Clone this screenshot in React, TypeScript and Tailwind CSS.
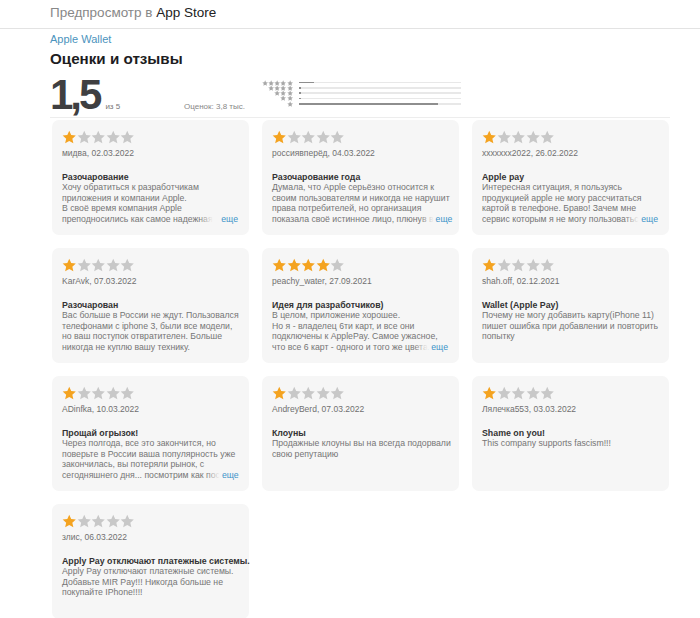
import React from "react";

type Review = {
  rating: number;
  author: string;
  title: string;
  lines: string[];
  more?: boolean;
};

const reviews: Review[] = [
  {
    rating: 1,
    author: "мидва, 02.03.2022",
    title: "Разочарование",
    lines: [
      "Хочу обратиться к разработчикам",
      "приложения и компании Apple.",
      "В своё время компания Apple",
      "преподносились как самое надежная",
    ],
    more: true,
  },
  {
    rating: 1,
    author: "россиявперёд, 04.03.2022",
    title: "Разочарование года",
    lines: [
      "Думала, что Apple серьёзно относится к",
      "своим пользователям и никогда не нарушит",
      "права потребителей, но организация",
      "показала своё истинное лицо, плюнув в",
    ],
    more: true,
  },
  {
    rating: 1,
    author: "xxxxxxx2022, 26.02.2022",
    title: "Apple pay",
    lines: [
      "Интересная ситуация, я пользуясь",
      "продукцией apple не могу рассчитаться",
      "картой в телефоне. Браво! Зачем мне",
      "сервис которым я не могу пользоватьс",
    ],
    more: true,
  },
  {
    rating: 1,
    author: "KarAvk, 07.03.2022",
    title: "Разочарован",
    lines: [
      "Вас больше в России не ждут. Пользовался",
      "телефонами с iphone 3, были все модели,",
      "но ваш поступок отвратителен. Больше",
      "никогда не куплю вашу технику.",
    ],
  },
  {
    rating: 4,
    author: "peachy_water, 27.09.2021",
    title: "Идея для разработчиков)",
    lines: [
      "В целом, приложение хорошее.",
      "Но я - владелец 6ти карт, и все они",
      "подключены к ApplePay. Самое ужасное,",
      "что все 6 карт - одного и того же цвета",
    ],
    more: true,
  },
  {
    rating: 1,
    author: "shah.off, 02.12.2021",
    title: "Wallet (Apple Pay)",
    lines: [
      "Почему не могу добавить карту(iPhone 11)",
      "пишет ошибка при добавлении и повторить",
      "попытку",
    ],
  },
  {
    rating: 1,
    author: "ADinfka, 10.03.2022",
    title: "Прощай огрызок!",
    lines: [
      "Через полгода, все это закончится, но",
      "поверьте в России ваша популярность уже",
      "закончилась, вы потеряли рынок, с",
      "сегодняшнего дня... посмотрим как пос",
    ],
    more: true,
  },
  {
    rating: 1,
    author: "AndreyBerd, 07.03.2022",
    title: "Клоуны",
    lines: ["Продажные клоуны вы на всегда подорвали", "свою репутацию"],
  },
  {
    rating: 1,
    author: "Лялечка553, 03.03.2022",
    title: "Shame on you!",
    lines: ["This company supports fascism!!!"],
  },
  {
    rating: 1,
    author: "злис, 06.03.2022",
    title: "Apply Pay отключают платежные системы.",
    lines: [
      "Apply Pay отключают платежные системы.",
      "Добавьте MIR Pay!!! Никогда больше не",
      "покупайте IPhone!!!!",
    ],
  },
];

const histogram = [
  { stars: 5, fill: 9 },
  { stars: 4, fill: 1.5 },
  { stars: 3, fill: 1.5 },
  { stars: 2, fill: 1.5 },
  { stars: 1, fill: 86 },
];

function Star({ color, size }: { color: string; size: number }) {
  return (
    <svg width={size} height={size} viewBox="0 0 24 24" className="shrink-0">
      <path
        d="M12 1.2l3.2 7.1 7.7.8-5.8 5.2 1.7 7.6L12 18l-6.8 3.9 1.7-7.6-5.8-5.2 7.7-.8z"
        fill={color}
      />
    </svg>
  );
}

function Card({ r }: { r: Review }) {
  return (
    <div className="h-[115px] rounded-[7px] bg-[#f6f6f6] pl-[10px] pr-[11px] pt-[10px]">
      <div className="flex h-[15px]">
        {[0, 1, 2, 3, 4].map((i) => (
          <Star key={i} size={14.5} color={i < r.rating ? "#f4a320" : "#c8c8c8"} />
        ))}
      </div>
      <div className="mt-[3px] text-[8.5px] leading-[10px] text-[#707070]">{r.author}</div>
      <div className="mt-[14px] whitespace-nowrap text-[8.8px] font-semibold leading-[10px] text-[#333]">
        {r.title}
      </div>
      <div className="text-[8.7px] leading-[10.7px] text-[#757575]">
        {r.lines.map((l, i) => {
          const last = r.more && i === r.lines.length - 1;
          if (!last)
            return (
              <div key={i} className="whitespace-nowrap">
                {l}
              </div>
            );
          return (
            <div key={i} className="flex items-baseline justify-between">
              <div className="relative whitespace-nowrap">
                {l}
                <div className="absolute inset-y-0 right-0 w-[14px] bg-gradient-to-r from-[#f6f6f600] to-[#f6f6f6]" />
              </div>
              <span className="ml-[2px] text-[#3d94c9]">еще</span>
            </div>
          );
        })}
      </div>
    </div>
  );
}

export default function App() {
  return (
    <div className="h-[618px] w-[700px] bg-white font-['Liberation_Sans',Arial,sans-serif]">
      <div className="h-[29px] border-b border-[#e3e3e3] pl-[50px] pt-[4px] text-[13.5px] leading-[17px] text-[#888]">
        Предпросмотр в <span className="text-[#222]">App Store</span>
      </div>

      <div className="pl-[50px] pr-[30px]">
        <div className="mt-[4px] text-[11px] leading-[12px] text-[#4b93bd]">Apple Wallet</div>
        <div className="mt-[4px] text-[15.2px] font-semibold leading-[20px] text-[#1d1d1f]">
          Оценки и отзывы
        </div>

        <div className="mt-[5px] flex h-[44px] border-b border-[#ededed]">
          <div className="flex w-[195px] items-baseline justify-between">
            <div className="flex items-baseline">
              <span className="text-[42px] font-bold leading-[42px] tracking-[-3px] text-[#3f3f41]">
                1,5
              </span>
              <span className="ml-[6px] text-[8px] text-[#777]">из 5</span>
            </div>
            <span className="text-[8px] text-[#888]">Оценок: 3,8 тыс.</span>
          </div>

          <div className="ml-[16px] mt-[6px] flex flex-col">
            {histogram.map((h) => (
              <div key={h.stars} className="flex h-[5.3px] items-center">
                <div className="flex w-[32px] justify-end">
                  {Array.from({ length: h.stars }).map((_, i) => (
                    <Star key={i} size={6.3} color="#a8a8a8" />
                  ))}
                </div>
                <div className="ml-[6px] h-[1.5px] w-[162px] bg-[#e8e8e8]">
                  <div className="h-full bg-[#8e8e8e]" style={{ width: `${h.fill}%` }} />
                </div>
              </div>
            ))}
          </div>
        </div>

        <div className="ml-[2px] mt-[2px] grid grid-cols-[197px_197px_197px] gap-x-[13px] gap-y-[13px]">
          {reviews.map((r, i) => (
            <Card key={i} r={r} />
          ))}
        </div>
      </div>
    </div>
  );
}
